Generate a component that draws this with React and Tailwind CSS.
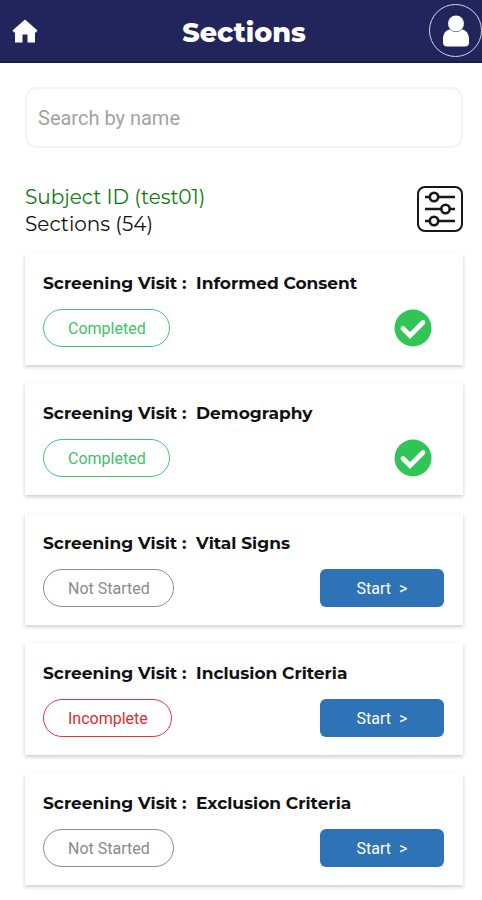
import { useState } from 'react';
import clsx from 'clsx';

const sections = [
  { visit: 'Screening Visit', name: 'Informed Consent', status: 'Completed' },
  { visit: 'Screening Visit', name: 'Demography', status: 'Completed' },
  { visit: 'Screening Visit', name: 'Vital Signs', status: 'Not Started' },
  { visit: 'Screening Visit', name: 'Inclusion Criteria', status: 'Incomplete' },
  { visit: 'Screening Visit', name: 'Exclusion Criteria', status: 'Not Started' },
];

const statusColors = {
  Completed: 'border-[#45c46c] text-[#3fc268]',
  'Not Started': 'border-[#8c8c8c] text-[#8a8a8a]',
  Incomplete: 'border-[#e0393b] text-[#dc2c2f]',
};

function HomeIcon() {
  return (
    <svg viewBox="0 0 26 24" className="w-[26px] h-6" fill="#fff" aria-hidden="true">
      <path d="M13 0.5 25.5 11.5 24 13.5H23V23.5H15.500V15.500H10.500V23.500H3V13.500H2L0.500 11.500Z" />
    </svg>
  );
}

function UserIcon() {
  return (
    <svg viewBox="0 0 28 32" className="w-7 h-8" fill="#fff" aria-hidden="true">
      <path d="M8 14.500C3.500 15 1 19 1 24v3.500Q1 31.500 5 31.500H23Q27 31.500 27 27.500V24c0-5-2.500-9-7-9.500Q14 19.500 8 14.500Z" />
      <circle cx="14" cy="8.500" r="8" />
    </svg>
  );
}

function FilterIcon() {
  return (
    <svg viewBox="0 0 32 36" className="w-8 h-9" fill="#fff" stroke="#15171c" strokeWidth="2.600" aria-hidden="true">
      <path d="M1 6h30M1 18h30M1 30h30" />
      <circle cx="10" cy="6" r="4.200" />
      <circle cx="21.500" cy="18" r="4.200" />
      <circle cx="10" cy="30" r="4.200" />
    </svg>
  );
}

function DoneIcon() {
  return (
    <svg viewBox="0 0 38 38" className="w-[38px] h-[38px] mr-3" role="img" aria-label="Done">
      <circle cx="19" cy="19" r="18.500" fill="#31c557" />
      <path d="M9 19.500 16 26.500 29 13.500" fill="none" stroke="#fff" strokeWidth="4.800" strokeLinecap="round" />
    </svg>
  );
}

function SectionCard({ visit, name, status }) {
  return (
    <li className="bg-white pl-[18px] pr-[19px] pt-[18px] pb-[18px] shadow-[0_2px_4px_rgba(0,0,0,0.2)]">
      <h2 className="font-bold text-[17px] leading-6 text-[#111] whitespace-pre-wrap">
        {visit} :{'  '}{name}
      </h2>
      <div className="mt-[14px] flex items-center justify-between">
        <span className={clsx("h-[38px] pl-6 pr-[23px] pt-px flex items-center rounded-full border font-['Roboto',sans-serif] text-base", statusColors[status])}>
          {status}
        </span>
        {status === 'Completed' ? (
          <DoneIcon />
        ) : (
          <button type="button" className="h-[38px] w-[124px] pt-px rounded-md bg-[#2f73b7] text-white font-['Roboto',sans-serif] text-base whitespace-pre">
            Start{'  '}&gt;
          </button>
        )}
      </div>
    </li>
  );
}

export default function App() {
  const [search, setSearch] = useState('');
  const visible = sections.filter(s => s.name.toLowerCase().includes(search.toLowerCase()));

  return (
    <div className="min-h-screen bg-white font-['Montserrat','Inter',sans-serif]">
      <header className="h-[63px] bg-[#22245c] border-b-2 border-[#191a4e] grid grid-cols-[1fr_auto_1fr] items-center pl-3">
        <button type="button" aria-label="Home" className="justify-self-start">
          <HomeIcon />
        </button>
        <h1 className="text-white text-[27px] leading-8 font-extrabold pt-1 pr-[6px]">Sections</h1>
        <button type="button" aria-label="Profile" className="justify-self-end w-[53px] h-[53px] rounded-full border border-[#d5d6e4] flex items-center justify-center">
          <UserIcon />
        </button>
      </header>

      <main className="pl-[25px] pr-[19px] pt-6 pb-4">
        <input
          type="text"
          aria-label="Search by name"
          placeholder="Search by name"
          value={search}
          onChange={e => setSearch(e.target.value)}
          className="block w-full h-[61px] px-[11px] rounded-xl border-2 border-[#f3f3f3] font-['Roboto',sans-serif] text-xl text-gray-800 placeholder:text-[#a3a3a3] outline-none"
        />

        <div className="mt-[34px] flex items-start justify-between">
          <div className="text-xl leading-[27px] pt-[2px]">
            <p className="text-[#0f7a0f]">Subject ID (test01)</p>
            <p className="text-[#111]">Sections (54)</p>
          </div>
          <button type="button" aria-label="Filter" className="mt-1 w-[46px] h-[46px] rounded-lg border-2 border-[#15171c] flex items-center justify-center">
            <FilterIcon />
          </button>
        </div>

        <ul className="mt-[15px] flex flex-col gap-[18px]">
          {visible.map(s => <SectionCard key={s.name} {...s} />)}
        </ul>
      </main>
    </div>
  );
}
